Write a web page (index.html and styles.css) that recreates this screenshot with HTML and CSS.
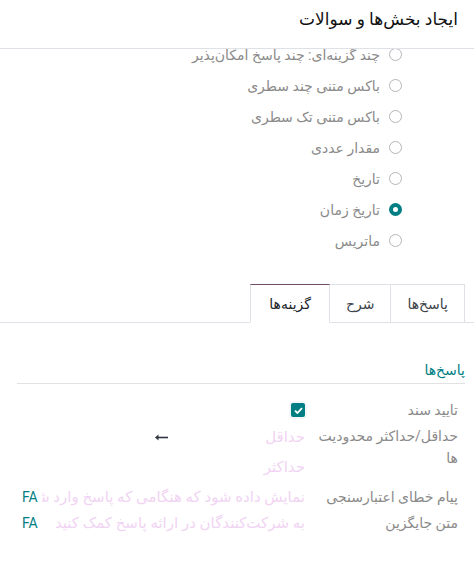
FILE: index.html
```html
<!DOCTYPE html>
<html lang="fa" dir="rtl">
<head>
  <meta charset="UTF-8" />
  <title>ایجاد بخش‌ها و سوالات</title>
  <link rel="stylesheet" href="styles.css">
</head>
<body>
  <div class="modal-header">
    <h4 class="modal-title">ایجاد بخش‌ها و سوالات</h4>
  </div>

  <div class="modal-body">
    <div class="scroll-inner">
      <ul class="radio-list">
        <li><span class="radio"></span><span>چند گزینه‌ای: چند پاسخ امکان‌پذیر</span></li>
        <li><span class="radio"></span><span>باکس متنی چند سطری</span></li>
        <li><span class="radio"></span><span>باکس متنی تک سطری</span></li>
        <li><span class="radio"></span><span>مقدار عددی</span></li>
        <li><span class="radio"></span><span>تاریخ</span></li>
        <li><span class="radio checked"></span><span>تاریخ زمان</span></li>
        <li><span class="radio"></span><span>ماتریس</span></li>
      </ul>

      <div class="tabs">
        <div class="tab">پاسخ‌ها</div>
        <div class="tab">شرح</div>
        <div class="tab active">گزینه‌ها</div>
      </div>

      <div class="tab-content">
        <div class="group-title">پاسخ‌ها</div>

        <div class="row">
          <label class="row-label">تایید سند</label>
          <div class="row-field">
            <span class="checkbox">
              <svg width="9" height="7" viewBox="0 0 9 7"><path d="M1 3.6 L3.4 6 L8 1.2" fill="none" stroke="#fff" stroke-width="1.8"/></svg>
            </span>
          </div>
        </div>

        <div class="row">
          <label class="row-label">حداقل/حداکثر محدودیت ها</label>
          <div class="row-field range">
            <input class="range-input first" placeholder="حداقل">
            <svg class="arrow" width="13" height="7" viewBox="0 0 13 7"><path d="M13 3.5 H2" stroke="#2f3640" stroke-width="1.6"/><path d="M0 3.5 L3.5 0.5 V6.5 Z" fill="#2f3640"/></svg>
            <input class="range-input second" placeholder="حداکثر">
          </div>
        </div>

        <div class="row">
          <label class="row-label">پیام خطای اعتبارسنجی</label>
          <div class="row-field translate">
            <input class="text-input" placeholder="نمایش داده شود که هنگامی که پاسخ وارد شود و معتبر نباشد">
            <span class="lang">FA</span>
          </div>
        </div>

        <div class="row">
          <label class="row-label">متن جایگزین</label>
          <div class="row-field translate">
            <input class="text-input" placeholder="به شرکت‌کنندگان در ارائه پاسخ کمک کنید">
            <span class="lang">FA</span>
          </div>
        </div>
      </div>
    </div>
  </div>
</body>
</html>
```

FILE: styles.css
```css
html {
  box-sizing: border-box;
}
*, *:before, *:after {
  box-sizing: inherit;
}

body {
  margin: 0;
  font-family: Roboto, "DejaVu Sans", sans-serif;
  font-size: 14px;
  color: #212529;
  background: #fff;
  width: 474px;
  height: 561px;
  overflow: hidden;
}

.modal-header {
  height: 49px;
  border-bottom: 1px solid #dee2e6;
  padding: 8px 16px 0;
}

.modal-title {
  margin: 0;
  font-size: 17px;
  font-weight: 400;
  line-height: 22px;
  color: #111;
}

.modal-body {
  height: 512px;
  overflow: hidden;
}

.scroll-inner {
  margin-top: -10px;
}

/* radio list */
.radio-list {
  list-style: none;
  margin: 0;
  padding: 0 72px 0 0;
}
.radio-list li {
  height: 31px;
  display: flex;
  align-items: center;
  gap: 9px;
  color: #8a8a8a;
  font-size: 14px;
}
.radio {
  width: 13px;
  height: 13px;
  flex: none;
  border: 1px solid #b5b5b5;
  border-radius: 50%;
}
.radio.checked {
  border: 4px solid #017e84;
  background: #fff;
}

/* tabs */
.tabs {
  display: flex;
  margin-top: 28px;
  padding-right: 9px;
  border-bottom: 1px solid #dee2e6;
}
.tab {
  height: 39px;
  margin-bottom: -1px;
  padding: 0 16px;
  display: flex;
  align-items: center;
  border: 1px solid #dee2e6;
  border-left: none;
  color: #3d434a;
  background: #fff;
}
.tab:first-child {
  border-right: 1px solid #dee2e6;
}
.tab.active {
  padding: 0 18px;
  border-top-color: #714b67;
  border-bottom-color: #fff;
  border-left: 1px solid #dee2e6;
  color: #212529;
}

/* options content */
.tab-content {
  padding: 39px 9px 0 17px;
}
.group-title {
  color: #017e84;
  font-weight: 500;
  font-size: 14px;
  line-height: 16px;
  padding-bottom: 5px;
  border-bottom: 1px solid #e2e2e2;
  margin-bottom: 13px;
}

.row {
  display: grid;
  grid-template-columns: 142px 1fr;
  column-gap: 11px;
  padding-right: 7px;
  min-height: 26px;
  align-items: start;
}
.row-label {
  color: #8a8a8a;
  font-size: 14px;
  line-height: 22px;
  padding-top: 2px;
}
.row-field {
  display: flex;
  align-items: center;
  min-height: 26px;
}

.checkbox {
  width: 14px;
  height: 14px;
  background: #017e84;
  border-radius: 2px;
  display: flex;
  align-items: center;
  justify-content: center;
  box-shadow: 0 0 0 2px #f3f7f9;
}

.range {
  flex-wrap: wrap;
  row-gap: 2px;
  margin-bottom: 3px;
}
input {
  font-family: Roboto, "DejaVu Sans", sans-serif;
  font-size: 15px;
  border: none;
  outline: none;
  padding: 0;
  background: transparent;
  color: #212529;
  direction: rtl;
}
input::placeholder {
  color: #f1d4f3;
  opacity: 1;
}
.range-input {
  height: 28px;
}
.range-input.first {
  width: 135px;
}
.range-input.second {
  width: 150px;
}
.arrow {
  margin: 0 2px;
}

.translate {
  gap: 2px;
  padding-left: 5px;
}
.text-input {
  flex: 1;
  min-width: 0;
  height: 26px;
}
.lang {
  color: #017e84;
  font-size: 14px;
  width: 18px;
  text-align: left;
}
```
